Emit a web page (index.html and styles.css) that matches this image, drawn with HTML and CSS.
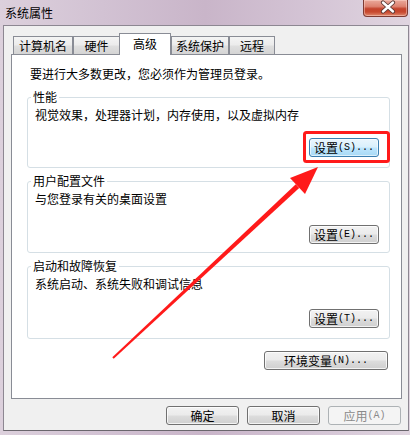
FILE: index.html
```html
<!DOCTYPE html>
<html lang="zh-CN">
<head>
<meta charset="utf-8">
<title>系统属性</title>
<link rel="stylesheet" href="styles.css">
</head>
<body>
<div class="window">
  <div class="titlebar">
    <span class="title">系统属性</span>
    <div class="close">
      <svg width="45" height="17" viewBox="0 0 45 17">
        <path d="M20 3.5 L30 12.5 M30 3.5 L20 12.5" stroke="#5a3a36" stroke-width="4.2" stroke-linecap="round"/>
        <path d="M20 3.5 L30 12.5 M30 3.5 L20 12.5" stroke="#ffffff" stroke-width="2.4" stroke-linecap="round"/>
      </svg>
    </div>
  </div>
  <div class="client">
    <div class="tabs">
      <div class="tab t1">计算机名</div>
      <div class="tab t2">硬件</div>
      <div class="tab sel">高级</div>
      <div class="tab t4">系统保护</div>
      <div class="tab t5">远程</div>
    </div>
    <div class="panel">
      <p class="intro">要进行大多数更改，您必须作为管理员登录。</p>
      <fieldset class="group g1">
        <legend>性能</legend>
        <div class="desc">视觉效果，处理器计划，内存使用，以及虚拟内存</div>
        <div class="row"><button class="btn focus">设置<span class="en">(S)...</span></button></div>
      </fieldset>
      <fieldset class="group g2">
        <legend>用户配置文件</legend>
        <div class="desc">与您登录有关的桌面设置</div>
        <div class="row"><button class="btn">设置<span class="en">(E)...</span></button></div>
      </fieldset>
      <fieldset class="group g3">
        <legend>启动和故障恢复</legend>
        <div class="desc">系统启动、系统失败和调试信息</div>
        <div class="row"><button class="btn">设置<span class="en">(T)...</span></button></div>
      </fieldset>
      <div class="env-row"><button class="btn wide">环境变量<span class="en">(N)...</span></button></div>
    </div>
    <div class="footer">
      <button class="btn foot">确定</button>
      <button class="btn foot">取消</button>
      <button class="btn foot disabled">应用<span class="en">(A)</span></button>
    </div>
  </div>
  <svg class="annot" width="410" height="435" viewBox="0 0 410 435">
    <rect x="304.5" y="132.5" width="84" height="29" rx="2" fill="none" stroke="#ff1a1a" stroke-width="3"/>
    <polygon points="113.7,358.7 112.3,357.3 295.8,184.3 299.2,187.9" fill="#ff1a1a"/>
    <polygon points="318,167 290,178 305,194.1" fill="#ff1a1a"/>
  </svg>
</div>
</body>
</html>
```

FILE: styles.css
```css
* { box-sizing: border-box; }

html, body {
  margin: 0;
  padding: 0;
}

body {
  width: 410px;
  height: 435px;
  overflow: hidden;
  font-family: "Noto Sans CJK SC", "Noto Sans", sans-serif;
  font-size: 12px;
  color: #000;
}

.window {
  position: relative;
  width: 410px;
  height: 435px;
  background: linear-gradient(90deg, #dcd0dc 0%, #d2c2d3 25%, #c9b5c9 50%, #d4c4d5 75%, #e0d5e0 100%);
  display: flex;
  flex-direction: column;
}

.titlebar {
  height: 25px;
  display: flex;
  justify-content: space-between;
  align-items: flex-start;
}

.title {
  padding: 6px 0 0 5px;
  line-height: 14px;
  font-size: 12px;
}

.close {
  width: 45px;
  height: 17px;
  margin-right: 2px;
  border: 1px solid #7e3b33;
  border-top: none;
  border-radius: 0 0 4px 4px;
  background: linear-gradient(#eaa99b 0%, #dd8270 40%, #c3432c 55%, #c8492f 75%, #e08a6f 100%);
  box-shadow: inset 0 0 0 1px rgba(255, 220, 210, 0.45);
  overflow: hidden;
}

.close svg {
  display: block;
  margin: -1px 0 0 -1px;
}

.client {
  margin-left: 3px;
  width: 406px;
  height: 406px;
  background: #f0f0f0;
  border: 1px solid #8d8792;
  border-bottom-color: #6a666d;
  padding: 7px 7px 0 9px;
  display: flex;
  flex-direction: column;
}

.tabs {
  display: flex;
  align-items: flex-end;
  height: 22px;
  position: relative;
  z-index: 2;
}

.tab {
  height: 18px;
  margin-bottom: 1px;
  border: 1px solid #898c95;
  border-bottom: none;
  background: linear-gradient(#f4f4f4 0%, #ececec 45%, #dfdfdf 55%, #d4d4d4 100%);
  display: flex;
  align-items: center;
  justify-content: center;
  line-height: 14px;
}

.t1 { width: 60px; }
.t2 { width: 47px; }
.t4 { width: 58px; }
.t5 { width: 46px; }

.tab.sel {
  width: 52px;
  height: 22px;
  margin: 0 0 0 -1px;
  background: #fff;
  padding-bottom: 2px;
}

.panel {
  margin: -1px 0 0 -2px;
  width: 391px;
  height: 345px;
  background: #fff;
  border: 1px solid #898c95;
  padding-top: 12px;
  display: flex;
  flex-direction: column;
}

.intro {
  margin: 0;
  padding-left: 18px;
  line-height: 14px;
}

.group {
  margin: 9px 11px 0 15px;
  border: 1px solid #d5dfe5;
  border-radius: 3px;
  padding: 0 10px 0 7px;
  min-width: 0;
  flex: none;
}

.g1 { height: 78px; }
.g2 { height: 79px; margin-top: 6px; }
.g3 { height: 80px; margin-top: 6px; }

.group legend {
  margin-left: -4px;
  padding: 0 2px;
  line-height: 14px;
}

.desc {
  margin-top: 4px;
  line-height: 14px;
}

.row {
  display: flex;
  justify-content: flex-end;
}

.g1 .row { margin-top: 16px; }
.g2 .row { margin-top: 19px; }
.g3 .row { margin-top: 18px; }

.btn {
  font-family: "Noto Sans CJK SC", "Noto Sans", sans-serif;
  font-size: 12px;
  color: #000;
  width: 70px;
  height: 19px;
  padding: 0;
  border: 1px solid #707070;
  border-radius: 3px;
  background: linear-gradient(#f2f2f2 0%, #ebebeb 48%, #dddddd 52%, #cfcfcf 100%);
  box-shadow: inset 0 0 0 1px rgba(255, 255, 255, 0.75);
  display: flex;
  align-items: center;
  justify-content: center;
  line-height: 14px;
}

.btn .en {
  font-family: "Liberation Mono", "DejaVu Sans Mono", monospace;
  font-size: 10px;
}

.btn.focus {
  border-color: #3c7fb1;
  background: linear-gradient(#eaf6fd 0%, #d9f0fc 48%, #bee6fd 52%, #a7d9f5 100%);
  box-shadow: inset 0 0 0 1px rgba(255, 255, 255, 0.6);
}

.env-row {
  margin: 12px 13px 0 0;
  display: flex;
  justify-content: flex-end;
}

.btn.wide {
  width: 124px;
}

.footer {
  margin-top: 7px;
  display: flex;
  justify-content: flex-end;
  gap: 8px;
}

.btn.foot {
  width: 73px;
}

.btn.disabled {
  color: #8a8a8a;
  border-color: #adb2b5;
  background: #f4f4f4;
  box-shadow: none;
}

.annot {
  position: absolute;
  left: 0;
  top: 0;
  pointer-events: none;
  z-index: 10;
}
```
